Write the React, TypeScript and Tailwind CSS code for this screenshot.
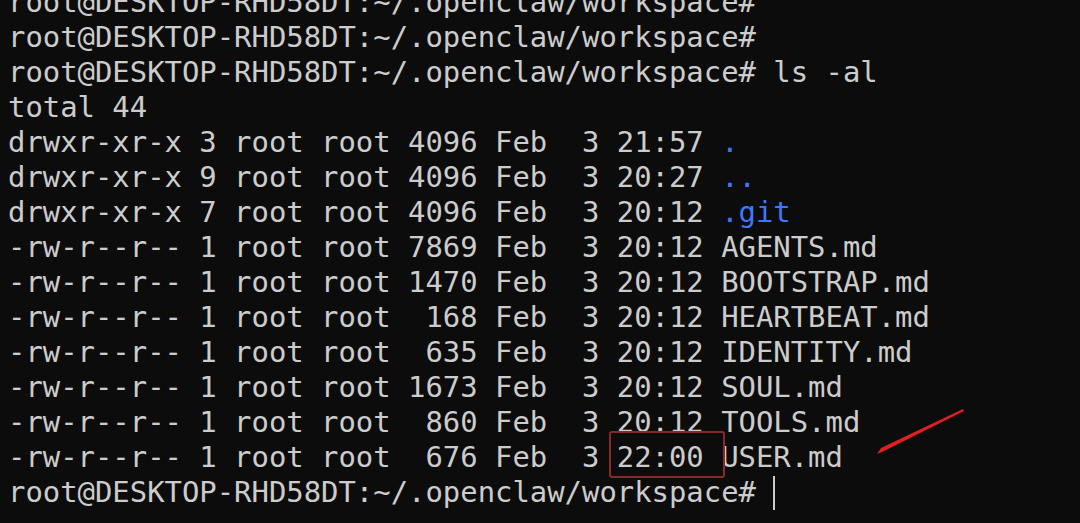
const prompt = "root@DESKTOP-RHD58DT:~/.openclaw/workspace#";

type Row = { perm: string; links: string; size: string; time: string; name: string; dir?: boolean };

const rows: Row[] = [
  { perm: "drwxr-xr-x", links: "3", size: "4096", time: "21:57", name: ".", dir: true },
  { perm: "drwxr-xr-x", links: "9", size: "4096", time: "20:27", name: "..", dir: true },
  { perm: "drwxr-xr-x", links: "7", size: "4096", time: "20:12", name: ".git", dir: true },
  { perm: "-rw-r--r--", links: "1", size: "7869", time: "20:12", name: "AGENTS.md" },
  { perm: "-rw-r--r--", links: "1", size: "1470", time: "20:12", name: "BOOTSTRAP.md" },
  { perm: "-rw-r--r--", links: "1", size: " 168", time: "20:12", name: "HEARTBEAT.md" },
  { perm: "-rw-r--r--", links: "1", size: " 635", time: "20:12", name: "IDENTITY.md" },
  { perm: "-rw-r--r--", links: "1", size: "1673", time: "20:12", name: "SOUL.md" },
  { perm: "-rw-r--r--", links: "1", size: " 860", time: "20:12", name: "TOOLS.md" },
  { perm: "-rw-r--r--", links: "1", size: " 676", time: "22:00", name: "USER.md" },
];

export default function App() {
  return (
    <div className="relative w-[1080px] h-[523px] overflow-hidden bg-[#0c0c0c] text-[#cccccc]">
      <div className="pl-[8px] -mt-[15px] whitespace-pre font-['DejaVu_Sans_Mono',monospace] text-[28.9px] leading-[35px]">
        <div>{prompt}</div>
        <div>{prompt}</div>
        <div>{prompt} ls -al</div>
        <div>total 44</div>
        {rows.map((r, i) => (
          <div key={i}>
            {`${r.perm} ${r.links} root root ${r.size} Feb  3 `}
            {r.name === "USER.md" ? (
              <span className="relative">
                {r.time}
                <span className="absolute -left-[8px] -right-[21px] -top-[9px] -bottom-[4px] border-2 border-[#8a2828] rounded-[3px]" />
              </span>
            ) : (
              r.time
            )}{" "}
            <span className={r.dir ? "text-[#3b78ff]" : ""}>{r.name}</span>
          </div>
        ))}
        <div className="flex items-center">
          <span>{prompt} </span>
          <span className="w-[2px] h-[34px] bg-[#cccccc]" />
        </div>
      </div>
      <svg className="absolute left-0 top-0" width="1080" height="523" viewBox="0 0 1080 523">
        <polygon points="963,409 964,411 884,451 877,454 881,448" fill="#e01f1f" />
      </svg>
    </div>
  );
}
